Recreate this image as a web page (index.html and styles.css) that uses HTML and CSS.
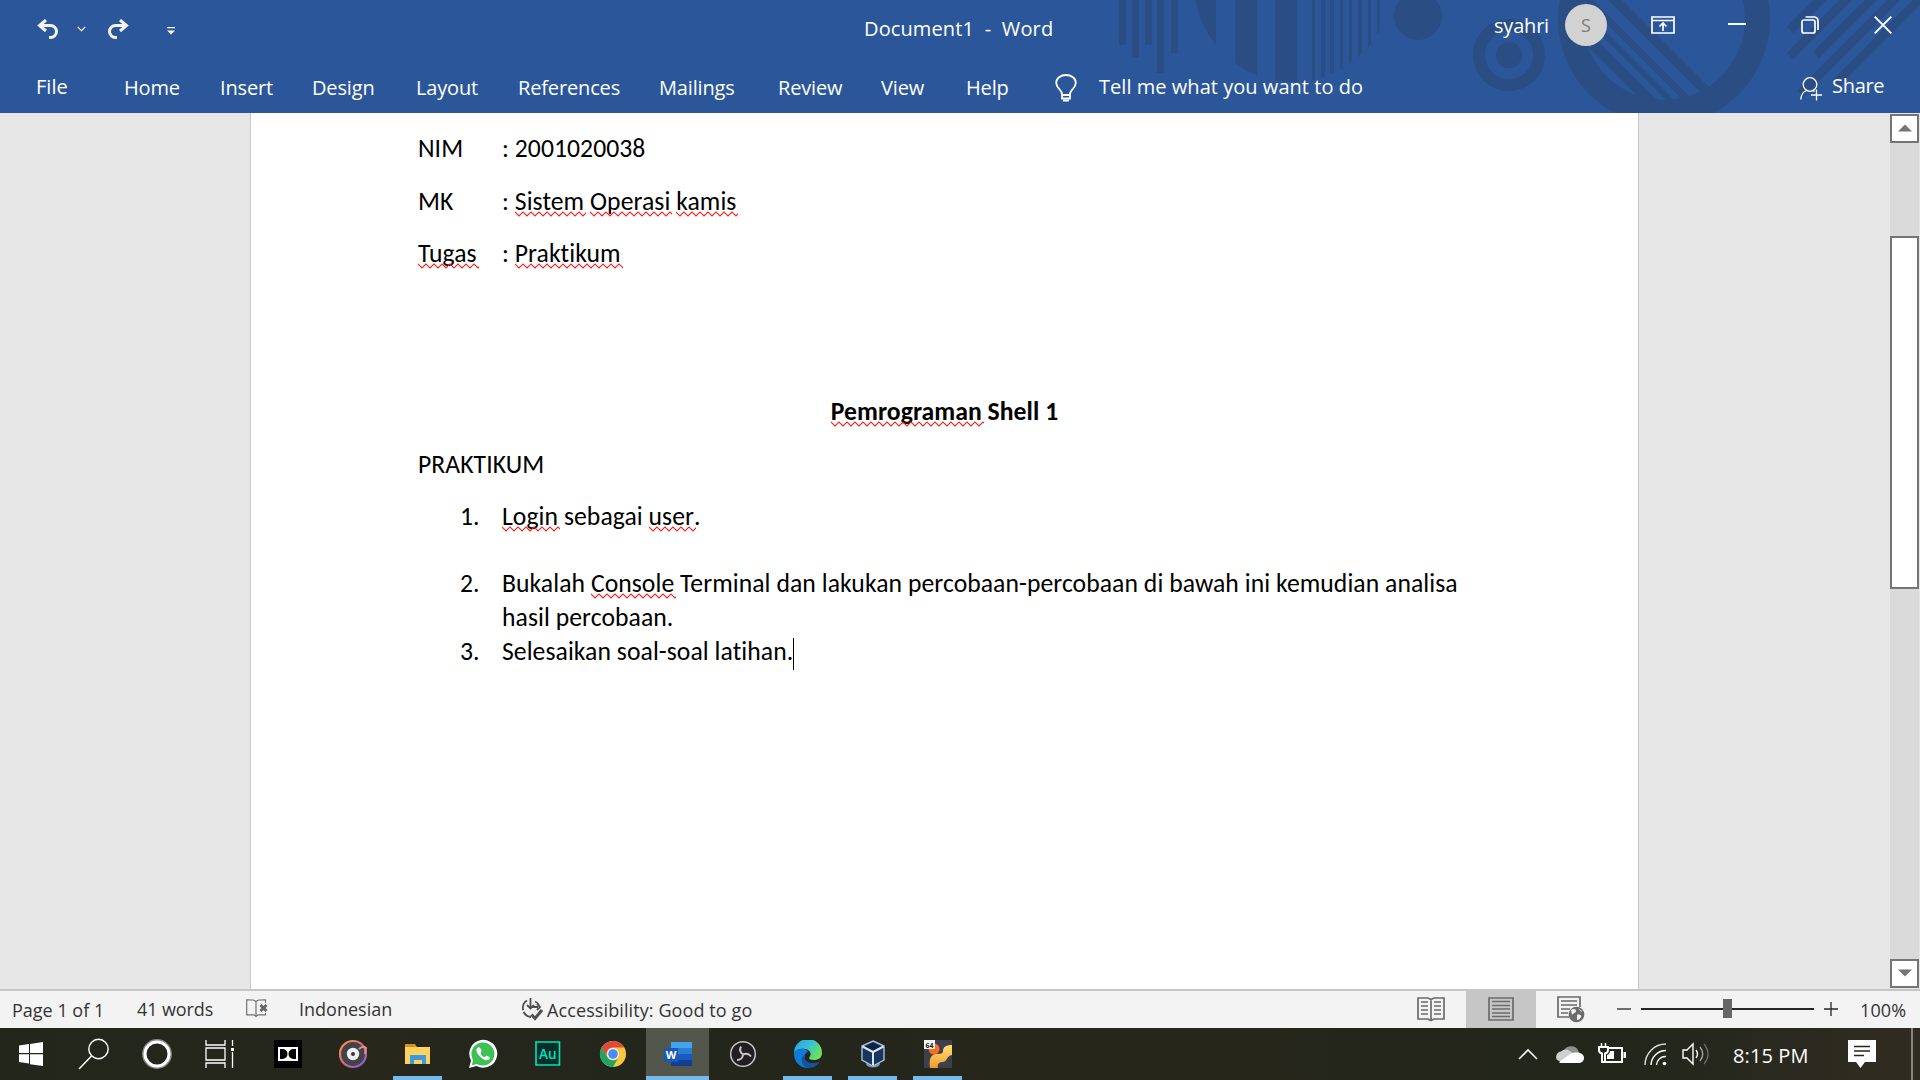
FILE: index.html
```html
<!DOCTYPE html>
<html lang="id">
<head>
<meta charset="utf-8">
<title>Document1 - Word</title>
<link rel="stylesheet" href="styles.css">
</head>
<body>
<div class="app">
  <header class="ribbon">
    <svg class="pattern" width="820" height="113" viewBox="1100 0 820 113">
      <defs>
        <clipPath id="disc"><circle cx="1293" cy="-17" r="99"/></clipPath>
        <clipPath id="hole"><circle cx="1664" cy="19" r="81"/></clipPath>
      </defs>
      <g fill="#2a4d84">
        <path d="M1119 0h7v45h-7zM1132 0h7v58h-7zM1145 0h7v45h-7zM1157 0h7v73h-7zM1171 0h7v53h-7z"/>
        <path clip-path="url(#disc)" d="M1190 0h26v90h-26zM1235 0h22v90h-22zM1275 0h22v90h-22zM1312 0h3v90h-3zM1321 0h4v90h-4zM1330 0h4v90h-4zM1340 0h3v90h-3zM1349 0h3v90h-3zM1358 0h4v90h-4zM1368 0h3v90h-3zM1377 0h3v90h-3z"/>
        <circle cx="1418" cy="16" r="24"/>
        <circle cx="1509" cy="55" r="13"/>
        <path clip-path="url(#hole)" d="M1608 0l120 120h14L1622 0zM1583 0l120 120h10L1593 0zM1566 0l120 120h8L1574 0zM1541 0l120 120h16L1557 0z"/>
      </g>
      <g fill="none" stroke="#2a4d84">
        <circle cx="1509" cy="55" r="30" stroke-width="12"/>
        <circle cx="1664" cy="19" r="93.5" stroke-width="25"/>
        <path stroke-width="9" d="M1790 30l40-40M1790 56l66-66M1816 55l65-65M1800 94L1904-10M1835 84l94-94"/>
      </g>
    </svg>
    <div class="titlebar">
      <div class="quick">
        <svg width="22" height="20" viewBox="0 0 22 20"><path d="M9 1L2.500 6.500 9 12M3 6.500h10.500a6 6 0 0 1 0 12H12" fill="none" stroke="#f3f3f3" stroke-width="3"/></svg>
        <svg class="q-caret" width="9" height="6" viewBox="0 0 9 6"><path d="M.7.8l3.800 3.800L8.300.8" fill="none" stroke="#fff" stroke-width="1.200"/></svg>
        <svg class="q-redo" width="22" height="20" viewBox="0 0 22 20"><path d="M13 1l6.500 5.500L13 12M19 6.500H8.500a6 6 0 0 0 0 12H10" fill="none" stroke="#f3f3f3" stroke-width="3"/></svg>
        <svg class="q-more" width="8" height="8" viewBox="0 0 8 8"><path d="M0 0h8v1.200H0zM0 3.500h8L4 7.500z" fill="#fff"/></svg>
      </div>
      <div class="doc-title">Document1&nbsp; -&nbsp; Word</div>
      <div class="account"><span class="user">syahri</span><span class="avatar">S</span></div>
      <div class="window-buttons">
        <svg width="24" height="18" viewBox="0 0 24 18"><path d="M1 1h22v16H1zM1 4.500h22M12 15V8M8.500 10.500L12 7l3.500 3.500" fill="none" stroke="#fff" stroke-width="1.700"/></svg>
        <svg width="18" height="18" viewBox="0 0 18 18"><path d="M0 8h18" stroke="#fff" stroke-width="2"/></svg>
        <svg width="18" height="18" viewBox="0 0 18 18"><path d="M3 4h9a2 2 0 0 1 2 2v9a2 2 0 0 1-2 2H3a2 2 0 0 1-2-2V6a2 2 0 0 1 2-2zM4.500 1H13a4 4 0 0 1 4 4v9" fill="none" stroke="#fff" stroke-width="1.700"/></svg>
        <svg width="18" height="18" viewBox="0 0 18 18"><path d="M.7.700l16.600 16.600M17.300.700L.7 17.300" stroke="#fff" stroke-width="1.900"/></svg>
      </div>
    </div>
    <nav class="tabs">
      <span class="file">File</span><span>Home</span><span>Insert</span><span>Design</span><span>Layout</span><span>References</span><span>Mailings</span><span>Review</span><span>View</span><span>Help</span>
      <svg class="bulb" width="22" height="29" viewBox="0 0 22 29"><path d="M7 20c0-4-5.800-5.500-5.800-11.300a9.800 7.700 0 0 1 19.600 0C20.800 14.500 15 16 15 20v4.500H7zM7 21h8" fill="none" stroke="#fff" stroke-width="1.800"/><path d="M8 26.500h6" stroke="#fff" stroke-width="2"/></svg>
      <span class="tell">Tell me what you want to do</span>
      <svg class="person" width="22" height="24" viewBox="0 0 22 24"><g fill="none" stroke="#fff" stroke-width="1.300"><circle cx="10" cy="7.500" r="6.800"/><path d="M.8 22.500c.4-5 2.600-8 6-9M13 13.500l1.500 1M16.500 12.500v11M11 18h11"/></g></svg>
      <span class="share">Share</span>
    </nav>
  </header>

  <main class="workspace">
    <article class="page">
      <p><span class="label">NIM</span>: 2001020038</p>
      <p><span class="label">MK</span>: <span class="err">Sistem</span> <span class="err">Operasi</span> <span class="err">kamis</span></p>
      <p><span class="label"><span class="err">Tugas</span></span>: <span class="err">Praktikum</span></p>
      <p>&nbsp;</p>
      <p>&nbsp;</p>
      <h1><span class="err">Pemrograman</span> Shell 1</h1>
      <p>PRAKTIKUM</p>
      <ol>
        <li class="spaced"><span class="num">1.</span><span><span class="err">Login</span> sebagai <span class="err">user</span>.</span></li>
        <li><span class="num">2.</span><span>Bukalah <span class="err">Console</span> Terminal dan lakukan percobaan-percobaan di bawah ini kemudian analisa hasil percobaan.</span></li>
        <li><span class="num">3.</span><span>Selesaikan soal-soal latihan.<i class="caret"></i></span></li>
      </ol>
    </article>
    <div class="scrollbar">
      <div class="sb-button"><svg width="14" height="8" viewBox="0 0 14 8"><path d="M0 7.500h14L7 .5z" fill="#757575"/></svg></div>
      <div class="sb-track"><div class="sb-thumb"></div></div>
      <div class="sb-button"><svg width="14" height="8" viewBox="0 0 14 8"><path d="M0 .5h14L7 7.500z" fill="#757575"/></svg></div>
    </div>
  </main>

  <footer class="status">
    <span class="s-page">Page 1 of 1</span>
    <span class="s-words">41 words</span>
    <svg class="s-proof" width="22" height="19" viewBox="0 0 22 19"><g fill="none" stroke="#737373" stroke-width="1.200"><path d="M10 2.500C8 .8 7 .8.700.800v15H8l2 1.700 2-1.700h7.500v-2M10 2.500v15M10 2.500C12 .8 13 .8 19.500.800v3"/></g><path d="M14.500 6l6 6M20.500 6l-6 6" stroke="#666" stroke-width="3"/></svg>
    <span class="s-lang">Indonesian</span>
    <svg class="s-acc" width="22" height="23" viewBox="0 0 22 23"><g fill="none" stroke="#505050" stroke-width="1.800"><path d="M9.500 0v10M6 7l3.500 3.500L13 7M11 9h6M16 6l3 3-3 3M6 2.500a9 9 0 0 0 4 16.500M14 3.500q3 1 4 4" /><path d="M10.500 16.500l3.500 4 7-8.500" stroke-width="3"/><path d="M1 13.500l3-1" stroke="#f3f3f3"/></g></svg>
    <span class="s-access">Accessibility: Good to go</span>
    <div class="views">
      <span class="view"><svg width="28" height="26" viewBox="0 0 28 26"><g fill="none" stroke="#6b6b6b"><path stroke-width="1.700" d="M1 2h10l3 1.500L17 2h10v21H17l-3 1.500-3-1.500H1zM14 3v22"/><path stroke-width="1.300" d="M4 6h7M4 10h7M4 14h7M4 18h7M17 6h7M17 10h7M17 14h7M17 18h7"/></g></svg></span>
      <span class="view on"><svg width="26" height="24" viewBox="0 0 26 24"><g fill="none" stroke="#6b6b6b"><path stroke-width="1.700" d="M1 1h24v22H1z"/><path stroke-width="1.400" d="M4 4.500h18M4 8.500h18M4 12h18M4 16h18M4 19.500h18"/></g></svg></span>
      <span class="view"><svg width="28" height="27" viewBox="0 0 28 27"><g fill="none" stroke="#6b6b6b"><path stroke-width="1.700" d="M12 21H1V1h22v10"/><path stroke-width="1.400" d="M4 5h16M4 9h16M4 13h9M4 17h7"/></g><circle cx="19.500" cy="18.500" r="7.800" fill="#6b6b6b"/><path d="M14 14c3-2 5-1 5 1s-3 2-4 4zM20 19c2-1 5 0 4 2s-2 3-4 3zM21 12.500c3 1 4 3 4 4z" fill="#f3f3f3"/></svg></span>
    </div>
    <div class="zoom">
      <svg width="14" height="14" viewBox="0 0 14 14"><path d="M0 7h14" stroke="#262626" stroke-width="1.300"/></svg>
      <div class="slider"><div class="knob"></div></div>
      <svg width="14" height="14" viewBox="0 0 14 14"><path d="M0 7h14M7 0v14" stroke="#262626" stroke-width="1.300"/></svg>
      <span class="percent">100%</span>
    </div>
  </footer>

  <div class="taskbar">
    <div class="sys">
      <span><svg width="26" height="26" viewBox="0 0 26 26"><path d="M1 4.500l10-1.400v9H1zM12 2.900L25 1v11.100H12zM1 13.200h10v9.200l-10-1.400zM12 13.200h13V25l-13-1.800z" fill="#fff"/></svg></span>
      <span><svg width="32" height="32" viewBox="0 0 32 32"><circle cx="20.500" cy="11" r="9.700" fill="none" stroke="#fff" stroke-width="1.400"/><path d="M13.500 18L1 31" stroke="#fff" stroke-width="1.500"/></svg></span>
      <span><svg width="30" height="30" viewBox="0 0 30 30"><circle cx="15" cy="15" r="13.600" fill="none" stroke="#8a8b86" stroke-width="2.600"/><circle cx="15" cy="15" r="12" fill="none" stroke="#fff" stroke-width="3"/></svg></span>
      <span><svg width="30" height="28" viewBox="0 0 30 28"><path d="M1 0v5h19V0M1 8h19v12H1zM1 28v-5h19v5M27.500 0v6M27.500 12v16" fill="none" stroke="#fff" stroke-width="1.300"/><path d="M26 8h3v3h-3z" fill="#fff"/></svg></span>
    </div>
    <div class="apps">
      <span><svg width="28" height="28" viewBox="0 0 28 28"><path d="M0 0h28v28H0z"/><path d="M4 7h20v14H4z" fill="#fff"/><path d="M6 9h2.500a5 5 0 0 1 0 10H6zM22 9h-2.500a5 5 0 0 0 0 10H22z"/></svg></span>
      <span><svg width="30" height="30" viewBox="0 0 30 30"><defs><linearGradient id="gm" x1="0" y1="0" x2="1" y2="1"><stop offset="0" stop-color="#ff9a35"/><stop offset=".5" stop-color="#d86a83"/><stop offset="1" stop-color="#7a5ce0"/></linearGradient></defs><circle cx="15" cy="15" r="13" fill="#41434b" stroke="url(#gm)" stroke-width="2.200"/><circle cx="15" cy="15" r="6.200" fill="#f0f0f0"/><circle cx="15" cy="15" r="2" fill="#333"/><path d="M21 10q4-4 7-1l-1 6" fill="none" stroke="#e98f89" stroke-width="2"/></svg></span>
      <span class="run"><svg width="26" height="22" viewBox="0 0 26 22"><path d="M0 1h10l2 3v3H0z" fill="#d99312"/><path d="M0 4h25v17H0z" fill="#fdd25f"/><path d="M5 21v-9h16v9h-4v-4H9v4z" fill="#3d9ae0"/></svg></span>
      <span><svg width="30" height="30" viewBox="0 0 30 30"><path d="M1 29l2-7.500A14 14 0 1 1 8.500 27z" fill="#fff"/><path d="M3.700 26.200l1.500-5A11.500 11.500 0 1 1 9 24.900z" fill="#3cc154"/><path d="M10 8.500c-2 1-2.500 4 1 8s7.500 6 10 4c1.500-1.500 1-2.500-2-3.700-1.500-.5-1.500 1.700-3 1.200-2-1-3-2.500-3.500-4 0-.8 1.500-1.500.8-3S11.500 7.700 10 8.500z" fill="#fff"/></svg></span>
      <span><svg width="26" height="26" viewBox="0 0 26 26"><path d="M1 1h23.500v23H1z" fill="#032e2a" stroke="#00e4bb" stroke-width="1.600"/><text x="12.800" y="17.500" text-anchor="middle" class="au">Au</text></svg></span>
      <span><svg width="28" height="28" viewBox="0 0 28 28"><circle cx="14" cy="14" r="13" fill="#fbc83c"/><path d="M2.700 7.500A13 13 0 0 1 25.300 7.500H14a6.500 6.500 0 0 0-5.700 9.600z" fill="#dc4a3d"/><path d="M2.700 7.500A13 13 0 0 0 14 27l5.600-9.800A6.500 6.500 0 0 1 8.300 17.100z" fill="#1ea463"/><circle cx="14" cy="14" r="6" fill="#f1f1f1"/><circle cx="14" cy="14" r="4.800" fill="#4b8bf5"/></svg></span>
      <span class="run active"><svg width="28" height="26" viewBox="0 0 28 26"><path d="M7 1h21v6H7z" fill="#41a5ee"/><path d="M7 7h21v6H7z" fill="#2b7cd3"/><path d="M7 13h21v6H7z" fill="#185abd"/><path d="M7 19h21v6H7z" fill="#103f91"/><path d="M0 7h14v14H0z" fill="#1858b8"/><text x="7" y="18" text-anchor="middle" class="wd">W</text></svg></span>
      <span><svg width="28" height="28" viewBox="0 0 28 28"><circle cx="14" cy="14" r="12.300" fill="#211f20" stroke="#c8c6c7" stroke-width="1.500"/><g fill="none" stroke="#c8c6c7" stroke-width="2"><path d="M14 14.500q-4.500-3-2-8"/><path d="M14 14.500q5-2 8 2"/><path d="M14 14.500q-.5 5.500-6 5.500"/></g></svg></span>
      <span class="run"><svg width="28" height="28" viewBox="0 0 28 28"><defs><linearGradient id="e1" x1="0" y1="0" x2="1" y2=".5"><stop offset="0" stop-color="#2a9fe0"/><stop offset=".55" stop-color="#35c1d8"/><stop offset="1" stop-color="#6ee05a"/></linearGradient></defs><path d="M0 13A14 14 0 0 1 28 13c0 5-4 7-8 7-3 0-5-1-5-2 0-1 2-2 1.500-5C15 8 4 7 0 13z" fill="url(#e1)"/><path d="M0 13c3-5 12-6 14-1-5 1-6 12 3 14.500l-2 1.500A14 14 0 0 1 0 13z" fill="#0f7ad8"/><path d="M11.500 14c-3 6 3 12 14.500 7.500-3 5-9 7.500-14 6C7 25 6 17 11.500 14z" fill="#1652a0"/></svg></span>
      <span class="run"><svg width="26" height="28" viewBox="0 0 26 28"><ellipse cx="13" cy="24" rx="7" ry="3.500" fill="#7893b5"/><path d="M13 1l11 5v14l-11 6-11-6V6z" fill="#17355f" stroke="#a8bed8" stroke-width="1.400"/><path d="M13 3l9 4-9 5-9-5z" fill="#0b2245"/><path d="M2.500 6.500L13 12l10.500-5.500M13 12v13" fill="none" stroke="#dbe6f3" stroke-width="2"/></svg></span>
      <span class="run"><svg width="28" height="28" viewBox="0 0 28 28"><defs><linearGradient id="or" x1="0" y1="0" x2="0" y2="1"><stop offset="0" stop-color="#ffdf7a"/><stop offset="1" stop-color="#f29a2a"/></linearGradient></defs><path d="M0 0h28v28H0z" fill="#3c404a"/><circle cx="10" cy="9" r="5.500" fill="#ff6b1a"/><path d="M28 5c-6 0-9 2-9 6 0 3-3 3-7 3-6 1-7 6-6 14h8c-1-4 1-6 5-6 5-1 3-6 9-7z" fill="url(#or)"/><path d="M0 0h11v9H0z" fill="#f6f6f6"/><text x="5.500" y="7.500" text-anchor="middle" class="bits">64</text></svg></span>
    </div>
    <div class="tray">
      <span><svg width="20" height="12" viewBox="0 0 20 12"><path d="M1 11l9-9 9 9" fill="none" stroke="#fff" stroke-width="1.600"/></svg></span>
      <span><svg width="28" height="20" viewBox="0 0 28 20"><path d="M8 7a7.500 6.500 0 0 1 14-1l1 3-12 4z" fill="#8f908b"/><path d="M1 16A5.500 5.500 0 0 1 5 7.500a6 6 0 0 1 8-1L20 11 6 18z" fill="#cfcfcd"/><path d="M3 18l12-8.500c3-1.500 5-1 7-1 4 .5 6 3 6 5.500s-2 5-5 5H6c-2 0-3-.5-3-1z" fill="#fff"/></svg></span>
      <span><svg width="28" height="22" viewBox="0 0 28 22"><path d="M3.500 0v5M7.500 0v5" stroke="#fff" stroke-width="1.500"/><path d="M1 4h9v3q0 3-3 3.500V19h-3v-8.500Q1 10 1 7zM10 5h14v14H6" fill="none" stroke="#fff" stroke-width="2"/><path d="M12 8h4v8H9v-4q3-1 3-4zM25.500 9H28v6h-2.500z" fill="#fff"/></svg></span>
      <span><svg class="wifi" width="24" height="24" viewBox="0 0 24 24"><g fill="none" stroke="#fff" stroke-width="1.400"><path d="M1 23A21 21 0 0 1 22 2" opacity=".85"/><path d="M7 23A15 15 0 0 1 22 8.500"/><path d="M12.500 23a9 9 0 0 1 9.500-8.500"/></g><circle cx="20.500" cy="21.500" r="1.800" fill="#fff"/></svg></span>
      <span><svg width="28" height="24" viewBox="0 0 28 24"><path d="M1 8h4l6-6v20l-6-6H1zM14 8q3 4 0 8" fill="none" stroke="#fff" stroke-width="1.400"/><path d="M18 5q5.500 7 0 14" fill="none" stroke="#a9aaa5" stroke-width="1.300"/><path d="M22 2q8 10 0 20" fill="none" stroke="#6d6e67" stroke-width="1.300"/></svg></span>
      <time>8:15 PM</time>
      <svg class="note" width="28" height="28" viewBox="0 0 28 28"><path d="M0 0h28v22H17l-4.500 6L8 22H0z" fill="#fff"/><path d="M6 6.500h16M6 11h16M6 15.500h10" stroke="#24251a" stroke-width="1.500"/></svg>
      <i class="desk"></i>
    </div>
  </div>
</div>
</body>
</html>
```
FILE: styles.css
```css
* { box-sizing: border-box; }
body {
  margin: 0;
  overflow: hidden;
  font-family: "Open Sans", "Noto Sans", sans-serif;
}
svg { display: block; flex: none; }
.app {
  display: grid;
  grid-template-rows: 113px 876px 39px 52px;
  width: 1920px;
  height: 1080px;
}

/* Ribbon */
.ribbon {
  position: relative;
  background: #2b579a;
  color: #fff;
  font-size: 20px;
  white-space: nowrap;
}
.pattern { position: absolute; right: 0; top: 0; }
.titlebar {
  position: relative;
  display: flex;
  align-items: flex-start;
  height: 58px;
  line-height: 28px;
}
.quick {
  display: flex;
  align-items: center;
  padding: 19px 0 0 37px;
  width: 864px;
}
.q-caret { margin-left: 18px; }
.q-redo { margin-left: 21px; }
.q-more { margin: 3px 0 0 38px; }
.doc-title { width: 629px; padding-top: 15px; letter-spacing: .12px; }
.account { display: flex; width: 158px; }
.user { width: 72px; padding: 12px 0 0 1px; letter-spacing: -.2px; }
.avatar {
  width: 42px;
  height: 42px;
  margin-top: 4px;
  border-radius: 50%;
  background: #d2d2d2;
  color: #7c7c7c;
  font-size: 18px;
  line-height: 42px;
  text-align: center;
}
.window-buttons {
  display: grid;
  grid-template-columns: 77px 73px 73px 18px;
  padding-top: 16px;
}
.tabs {
  position: relative;
  display: grid;
  grid-template-columns: 88px 96px 92px 104px 102px 141px 119px 103px 85px 89px 44px 701px 32px auto;
  padding: 16px 0 0 36px;
  line-height: 28px;
  letter-spacing: -.15px;
}
.tabs .file, .tabs .tell { margin-top: -1px; letter-spacing: .04px; }
.tabs .share { margin-top: -2px; letter-spacing: -.3px; }
.person { margin-top: 3px; }

/* Document */
.workspace {
  display: flex;
  justify-content: space-between;
  background: #e6e6e6;
}
.page {
  width: 1389px;
  margin-left: 250px;
  padding: 19px 160px 0 167px;
  border: solid #c6c6c6;
  border-width: 0 1px;
  background: #fff;
  color: #000;
  font-family: Carlito, Calibri, Lato, "Open Sans", sans-serif;
  font-size: 25.67px;
  font-variant-ligatures: none;
  letter-spacing: .06px;
  line-height: 34px;
}
.page p, .page h1 { margin: 0 0 18.6px; font-size: inherit; }
.page h1 { margin-right: 7px; text-align: center; }
.label { display: inline-block; width: 84px; }
.page ol { margin: 0; padding: 0 0 0 42px; list-style: none; }
.page li { display: flex; }
.page .spaced { margin-bottom: 33px; }
.num { flex: none; width: 42px; }
.err { position: relative; }
.err::after {
  content: "";
  position: absolute;
  left: 0;
  right: -2px;
  bottom: 0;
  height: 6px;
  background: url("data:image/svg+xml,%3Csvg xmlns='http://www.w3.org/2000/svg' width='8' height='6'%3E%3Cpath d='M-1 0L4 5L9 0' fill='none' stroke='%23f02020' stroke-width='1.2'/%3E%3C/svg%3E") repeat-x;
}
.caret {
  display: inline-block;
  width: 1px;
  height: 32px;
  margin: -8px 0;
  background: #000;
  vertical-align: middle;
}
.scrollbar {
  display: flex;
  flex-direction: column;
  width: 29px;
  margin: 1px 1px 1px 0;
}
.sb-button {
  display: flex;
  align-items: center;
  justify-content: center;
  height: 29px;
  border: 2px solid #757575;
  background: #fff;
}
.sb-button svg { margin-bottom: 2px; }
.sb-track { flex: 1; padding-top: 93px; background: #dadada; }
.sb-thumb { height: 353px; border: 2px solid #757575; background: #fff; }

/* Status bar */
.status {
  display: flex;
  align-items: center;
  border-top: 2px solid #c6c6c6;
  background: #f3f3f3;
  color: #333;
  font-size: 18px;
  line-height: 24px;
  white-space: nowrap;
}
.s-page { width: 125px; margin-left: 12px; padding-top: 1px; }
.s-words { width: 109px; margin-top: -1px; letter-spacing: -.1px; }
.s-proof { margin-bottom: 2px; }
.s-lang { width: 222px; margin: -1px 0 0 31px; }
.s-access { width: 849px; margin-left: 4px; padding-top: 1px; letter-spacing: .1px; }
.views { display: flex; align-self: stretch; }
.view { display: flex; align-items: center; justify-content: center; width: 70px; }
.view svg { margin-bottom: 1px; }
.views .on { background: #c6c6c6; }
.zoom { display: flex; align-items: center; margin: -1px 0 0 11px; }
.slider { width: 173px; height: 2px; margin: 0 10px; background: #262626; }
.knob { width: 9px; height: 19px; margin: -9px 0 0 82px; background: #666; }
.percent { margin-left: 22px; padding-top: 1px; letter-spacing: .1px; }

/* Taskbar */
.taskbar {
  display: flex;
  background: linear-gradient(90deg, #22261b, #27271c 20%, #23261b 33%, #27261b 60%, #22261b 85%, #312c22);
  color: #fff;
}
.sys, .apps, .tray { display: flex; }
.sys span {
  display: flex;
  align-items: center;
  justify-content: center;
  width: 63px;
  padding-right: 1px;
}
.apps { margin-left: 3px; }
.apps span {
  display: flex;
  align-items: center;
  justify-content: center;
  width: 65px;
}
.apps .run { background: linear-gradient(#76b9ed, #76b9ed) bottom / 49px 4px no-repeat; }
.apps .active {
  background:
    linear-gradient(#76b9ed, #76b9ed) bottom / 63px 4px no-repeat,
    linear-gradient(#53564b, #53564b) center / 63px no-repeat;
}
.au { font: 600 13.5px "Open Sans", sans-serif; fill: #00e4bb; }
.wd { font: 700 11px "Open Sans", sans-serif; fill: #fff; }
.bits { font: 700 7px "Open Sans", sans-serif; fill: #222; }
.tray { align-items: center; margin-left: auto; }
.tray span { display: flex; justify-content: center; width: 42px; }
.wifi { margin-left: 3px; }
.tray time {
  width: 114px;
  margin-left: 16px;
  padding-top: 3px;
  font-size: 20px;
  line-height: 28px;
  letter-spacing: .1px;
  white-space: nowrap;
}
.note { margin-left: 1px; }
.desk { align-self: stretch; width: 2px; margin: 0 7px 0 35px; background: #86867f; }
```
